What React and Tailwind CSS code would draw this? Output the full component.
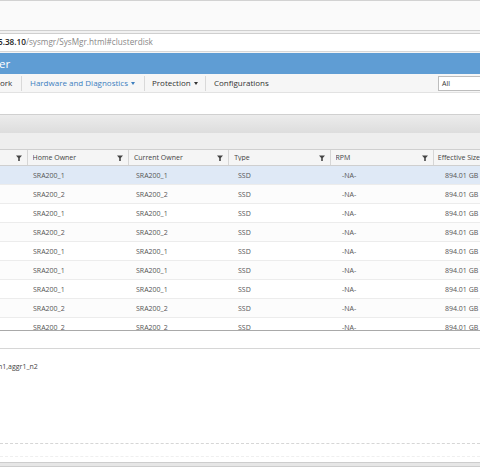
import React from "react";

const rows = [
  ["SRA200_1", "SRA200_1"],
  ["SRA200_2", "SRA200_2"],
  ["SRA200_1", "SRA200_1"],
  ["SRA200_2", "SRA200_2"],
  ["SRA200_1", "SRA200_1"],
  ["SRA200_1", "SRA200_1"],
  ["SRA200_1", "SRA200_1"],
  ["SRA200_2", "SRA200_2"],
  ["SRA200_2", "SRA200_2"],
];

function Filter() {
  return (
    <svg width="6" height="6" viewBox="0 0 6 6" className="shrink-0">
      <path d="M0 0.5H6L3.8 3V6H2.2V3Z" fill="#444" />
    </svg>
  );
}

function HeadCell({ label, w, first }) {
  return (
    <div
      className={`flex items-center h-full border-r border-[#d6d6d6] pr-[5px] ${first ? "" : "pl-[5px]"}`}
      style={{ width: w }}
    >
      <span className="flex-1 truncate">{label}</span>
      <Filter />
    </div>
  );
}

function Caret() {
  return <span className="inline-block ml-[3px] align-middle border-l-[2.5px] border-r-[2.5px] border-t-[3px] border-l-transparent border-r-transparent border-t-current" />;
}

export default function App() {
  return (
    <div
      className="w-[480px] h-[470px] overflow-hidden bg-white text-[#444] flex flex-col"
      style={{ fontFamily: '"Open Sans", "Noto Sans", sans-serif' }}
    >
      {/* browser top */}
      <div className="h-[30px] shrink-0 bg-[#fafafa] border-t border-[#d2d2d2]" />
      <div className="h-[4px] shrink-0 bg-[#f1f1f1] border-t border-b border-[#cfcfcf]" />
      <div className="h-[17px] shrink-0 bg-white flex items-center text-[8.2px] leading-none whitespace-nowrap">
        <span className="ml-[-2px] text-[#222] font-semibold">5.38.10</span>
        <span className="text-[#888]">/sysmgr/SysMgr.html#clusterdisk</span>
      </div>
      <div className="h-[2px] shrink-0 bg-[#f4f4f4] border-t border-[#d8d8d8]" />
      {/* blue bar */}
      <div className="h-[21px] shrink-0 bg-[#5f9dd4] flex items-center text-white text-[11.5px] leading-none">
        <span className="ml-[-1px]">er</span>
      </div>
      {/* menu bar */}
      <div className="h-[19px] shrink-0 bg-[#f6f6f6] border-b border-[#e2e2e2] flex items-center text-[8px] leading-none whitespace-nowrap">
        <span className="w-[21px] text-[#333]">ork</span>
        <span className="w-px h-[15px] bg-[#d9d9d9]" />
        <span className="w-[122px] pl-[8px] text-[#3d7fbf]">Hardware and Diagnostics<Caret /></span>
        <span className="w-px h-[15px] bg-[#d9d9d9]" />
        <span className="w-[60px] pl-[7px] text-[#333]">Protection<Caret /></span>
        <span className="w-px h-[15px] bg-[#d9d9d9]" />
        <span className="pl-[8px] text-[#333]">Configurations</span>
        <div className="ml-auto mr-[-10px] w-[52px] h-[15px] bg-white border border-[#bdbdbd] flex items-center pl-[3px] text-[7px] text-[#333]">
          All
        </div>
      </div>
      <div className="h-[21px] shrink-0 bg-white" />
      {/* toolbar gradient */}
      <div className="h-[19px] shrink-0 bg-gradient-to-b from-[#ececec] to-[#dddddd] border-t border-[#d0d0d0]" />
      <div className="h-[16px] shrink-0 bg-[#eeeeee]" />
      {/* table header */}
      <div className="h-[17px] shrink-0 bg-[#f5f5f5] border-t border-b border-[#cfcfcf] flex text-[7px] leading-none text-[#444] whitespace-nowrap">
        <HeadCell label="" w={28} first />
        <HeadCell label="Home Owner" w={103} />
        <HeadCell label="Current Owner" w={102} />
        <HeadCell label="Type" w={103} />
        <HeadCell label="RPM" w={105} />
        <div className="flex items-center pl-[4px]">Effective Size</div>
      </div>
      {/* rows */}
      <div className="h-[165px] shrink-0 overflow-hidden border-b border-[#a9a9a9] text-[7px] leading-none text-[#555] whitespace-nowrap">
        {rows.map((r, i) => (
          <div
            key={i}
            className={`h-[19px] flex items-center border-b border-[#ececec] ${i === 0 ? "bg-[#dfe9f6]" : i % 2 === 1 ? "bg-[#fcfcfc]" : "bg-white"}`}
          >
            <div className="w-[28px] h-full" />
            <div className="w-[103px] pl-[5px] text-[#555]">{r[0]}</div>
            <div className="w-[102px] pl-[5px] text-[#555]">{r[1]}</div>
            <div className="w-[103px] pl-[5px] text-[#555]">SSD</div>
            <div className="w-[105px] pl-[6px] text-[#555]">-NA-</div>
            <div className="pl-[4px] text-[#555]">894.01 GB</div>
          </div>
        ))}
      </div>
      <div className="h-[18px] shrink-0 bg-white border-b border-[#d6d6d6]" />
      <div className="h-[94px] shrink-0 bg-white pt-[14px] text-[7px] leading-none text-[#444] whitespace-nowrap">
        <span className="ml-[-2px]">n1,aggr1_n2</span>
      </div>
      <div className="h-[14px] shrink-0 bg-white border-t border-[#d6d6d6] border-b border-dashed border-b-[#efefef]" />
      <div className="h-[5px] shrink-0 bg-white" />
      <div className="h-[5px] shrink-0 bg-[#e6e6e6] border-t border-b border-[#cdcdcd]" />
      <div className="flex-1 bg-white" />
    </div>
  );
}
